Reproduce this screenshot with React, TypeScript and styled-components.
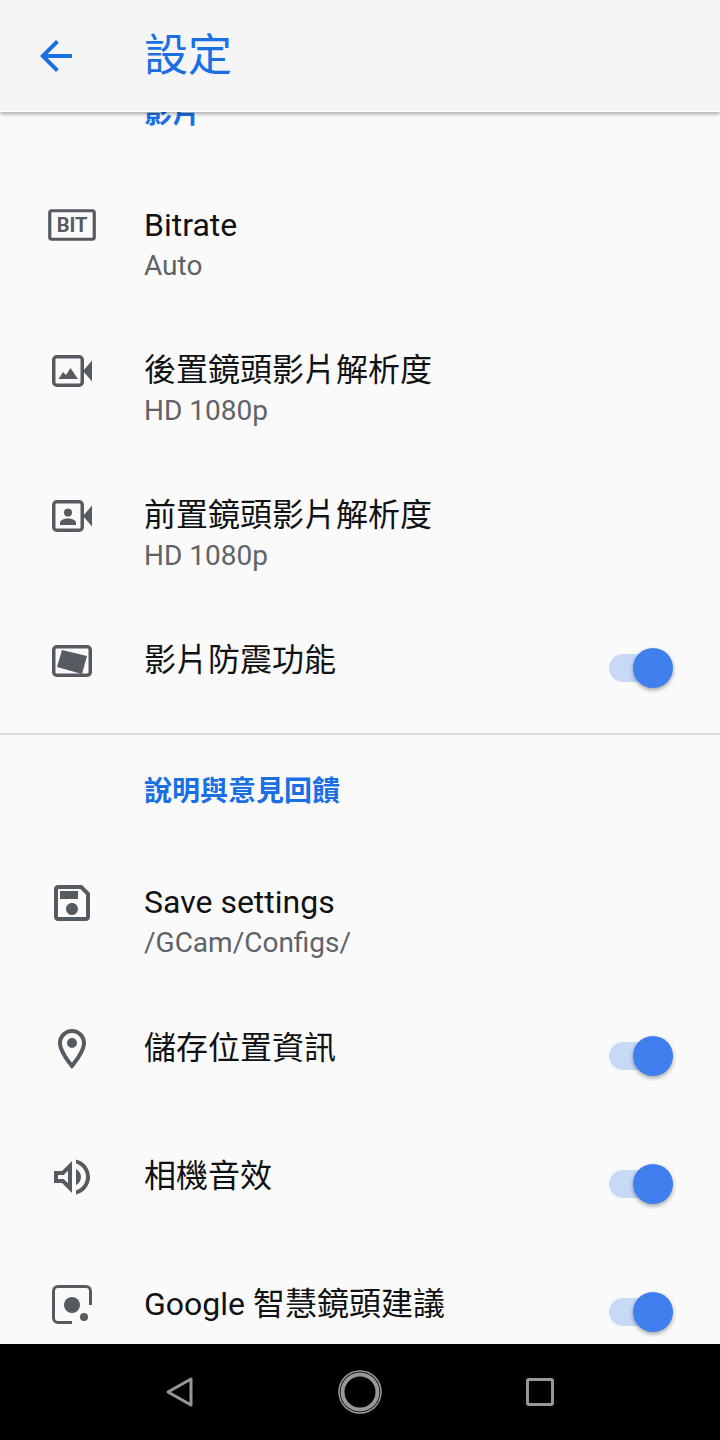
import React from "react";
import styled, { createGlobalStyle } from "styled-components";

const GlobalStyle = createGlobalStyle`
  html, body {
    margin: 0;
    padding: 0;
    background: #000;
  }
  * {
    box-sizing: border-box;
  }
`;

const FONT = `Roboto, "Noto Sans CJK TC", sans-serif`;
const BLUE = "#1a6fe3";
const ICON = "#565b61";

const Screen = styled.div`
  width: 720px;
  height: 1440px;
  display: flex;
  flex-direction: column;
  overflow: hidden;
  background: #fafafa;
  font-family: ${FONT};
`;

const Toolbar = styled.header`
  flex: 0 0 112px;
  display: flex;
  align-items: center;
  background: #f5f5f5;
  border-bottom: 1px solid #fff;
  box-shadow: 0 2px 4px rgba(0, 0, 0, 0.32);
  position: relative;
  z-index: 2;
  padding-left: 32px;
`;

const BackIcon = styled.svg`
  width: 48px;
  height: 48px;
  fill: ${BLUE};
  margin-right: 64px;
`;

const ToolbarTitle = styled.h1`
  margin: 0;
  font-size: 44px;
  line-height: 48px;
  font-weight: 400;
  color: ${BLUE};
`;

const Scroller = styled.main`
  flex: 1;
  min-height: 0;
  overflow: hidden;
`;

const ScrollContent = styled.div`
  margin-top: -18px;
`;

const SectionTitle = styled.h2<{ $top?: number; $bottom: number }>`
  margin: 0;
  padding: ${(p) => p.$top ?? 0}px 0 ${(p) => p.$bottom}px 144px;
  font-size: 28px;
  line-height: 40px;
  font-weight: 700;
  color: ${BLUE};
`;

const Divider = styled.hr`
  margin: 0;
  border: 0;
  height: 2px;
  background: #dcdcdc;
`;

const Row = styled.div<{ $height: number }>`
  height: ${(p) => p.$height}px;
  flex-shrink: 0;
  display: flex;
  align-items: flex-start;
  padding: 22px 47px 0 48px;
`;

const RowIcon = styled.svg`
  flex: 0 0 48px;
  width: 48px;
  height: 48px;
  margin: -1px 48px 0 0;
  fill: ${ICON};
`;

const RowText = styled.div`
  flex: 1;
  min-width: 0;
`;

const RowTitle = styled.div`
  font-size: 32px;
  line-height: 44px;
  color: #111214;
`;

const RowSub = styled.div`
  font-size: 28px;
  line-height: 38px;
  color: #5f6368;
`;

const SwitchBox = styled.div`
  position: relative;
  width: 64px;
  height: 40px;
  margin-top: 10px;
  flex: 0 0 64px;
`;

const SwitchTrack = styled.div`
  position: absolute;
  left: 0;
  top: 6px;
  width: 60px;
  height: 28px;
  border-radius: 14px;
  background: #c8d9f8;
`;

const SwitchThumb = styled.div`
  position: absolute;
  right: 0;
  top: 0;
  width: 40px;
  height: 40px;
  border-radius: 50%;
  background: #3f80ee;
  box-shadow: 0 2px 4px rgba(0, 0, 0, 0.35);
`;

const NavBar = styled.nav`
  flex: 0 0 96px;
  background: #000;
  display: flex;
  justify-content: center;
  align-items: center;
  gap: 120px;
`;

const NavIcon = styled.svg`
  width: 60px;
  height: 60px;
  fill: none;
  stroke: #989898;
`;

function BitIcon() {
  return (
    <RowIcon viewBox="0 0 48 48">
      <rect x="1.750" y="8.750" width="44.500" height="28.500" rx="2" fill="none" stroke={ICON} strokeWidth="3.200" />
      <text x="24" y="30" textAnchor="middle" fontFamily="Roboto, sans-serif" fontWeight="700" fontSize="20">
        BIT
      </text>
    </RowIcon>
  );
}

function CameraFrame() {
  return (
    <>
      <rect x="5.750" y="9.750" width="28.500" height="28.500" rx="3" fill="none" stroke={ICON} strokeWidth="3.500" />
      <path d="M35 24L44 13.500V34.500Z" />
    </>
  );
}

function RearVideoIcon() {
  return (
    <RowIcon viewBox="0 0 48 48">
      <CameraFrame />
      <path d="M10.500 32L15 25l3 3 4.500-7L30 32Z" />
    </RowIcon>
  );
}

function FrontVideoIcon() {
  return (
    <RowIcon viewBox="0 0 48 48">
      <CameraFrame />
      <circle cx="20" cy="20.500" r="4" />
      <path d="M12 33v-2.500c0-2.500 5-4 8-4s8 1.500 8 4V33Z" />
    </RowIcon>
  );
}

function StabilizeIcon() {
  return (
    <RowIcon viewBox="0 0 48 48">
      <rect x="5.750" y="9.750" width="36.500" height="28.500" rx="3" fill="none" stroke={ICON} strokeWidth="3.500" />
      <path d="M14 13L39 19L34 37L9 30Z" />
    </RowIcon>
  );
}

function SaveIcon() {
  return (
    <RowIcon viewBox="0 0 24 24">
      <path d="M17 3H5c-1.110 0-2 .9-2 2v14c0 1.100.89 2 2 2h14c1.100 0 2-.9 2-2V7l-4-4zm2 16H5V5h11.170L19 7.830V19zm-7-7c-1.660 0-3 1.340-3 3s1.340 3 3 3 3-1.340 3-3-1.340-3-3-3zM6 6h9v4H6z" />
    </RowIcon>
  );
}

function PlaceIcon() {
  return (
    <RowIcon viewBox="0 0 24 24">
      <path d="M12 2C8.130 2 5 5.130 5 9c0 5.250 7 13 7 13s7-7.750 7-13c0-3.870-3.130-7-7-7zM7 9c0-2.760 2.240-5 5-5s5 2.240 5 5c0 2.880-2.880 7.190-5 9.880C9.920 16.210 7 11.850 7 9z" />
      <circle cx="12" cy="9" r="2.500" />
    </RowIcon>
  );
}

function VolumeIcon() {
  return (
    <RowIcon viewBox="0 0 24 24">
      <path d="M3 9v6h4l5 5V4L7 9H3zm7-.17v6.340L7.830 13H5v-2h2.830L10 8.830zM16.500 12c0-1.770-1.020-3.290-2.500-4.030v8.050c1.480-.73 2.500-2.250 2.500-4.020zM14 3.230v2.060c2.890.86 5 3.540 5 6.710s-2.110 5.850-5 6.710v2.060c4.010-.91 7-4.490 7-8.770 0-4.280-2.990-7.860-7-8.770z" />
    </RowIcon>
  );
}

function LensIcon() {
  return (
    <RowIcon viewBox="0 0 48 48">
      <path
        d="M42.500 24V10a4.500 4.500 0 0 0-4.500-4.500H10A4.500 4.500 0 0 0 5.500 10v27a4.500 4.500 0 0 0 4.500 4.500h14"
        fill="none"
        stroke={ICON}
        strokeWidth="3"
      />
      <circle cx="24" cy="24" r="8" />
      <circle cx="36" cy="36" r="4" />
    </RowIcon>
  );
}

function Switch() {
  return (
    <SwitchBox>
      <SwitchTrack />
      <SwitchThumb />
    </SwitchBox>
  );
}

interface SettingProps {
  icon: React.ReactNode;
  title: string;
  sub?: string;
  toggle?: boolean;
  height: number;
}

function Setting({ icon, title, sub, toggle, height }: SettingProps) {
  return (
    <Row $height={height}>
      {icon}
      <RowText>
        <RowTitle>{title}</RowTitle>
        {sub && <RowSub>{sub}</RowSub>}
      </RowText>
      {toggle && <Switch />}
    </Row>
  );
}

export default function App() {
  return (
    <Screen>
      <GlobalStyle />
      <Toolbar>
        <BackIcon viewBox="0 0 24 24">
          <path d="M20 11H7.830l5.590-5.590L12 4l-8 8 8 8 1.410-1.410L7.830 13H20v-2z" />
        </BackIcon>
        <ToolbarTitle>設定</ToolbarTitle>
      </Toolbar>
      <Scroller>
        <ScrollContent>
          <SectionTitle $bottom={47}>影片</SectionTitle>
          <Setting icon={<BitIcon />} title="Bitrate" sub="Auto" height={145} />
          <Setting icon={<RearVideoIcon />} title="後置鏡頭影片解析度" sub="HD 1080p" height={145} />
          <Setting icon={<FrontVideoIcon />} title="前置鏡頭影片解析度" sub="HD 1080p" height={145} />
          <Setting icon={<StabilizeIcon />} title="影片防震功能" toggle height={117} />
          <Divider />
          <SectionTitle $top={37} $bottom={46}>說明與意見回饋</SectionTitle>
          <Setting icon={<SaveIcon />} title="Save settings" sub="/GCam/Configs/" height={146} />
          <Setting icon={<PlaceIcon />} title="儲存位置資訊" toggle height={128} />
          <Setting icon={<VolumeIcon />} title="相機音效" toggle height={128} />
          <Setting icon={<LensIcon />} title="Google 智慧鏡頭建議" toggle height={128} />
        </ScrollContent>
      </Scroller>
      <NavBar>
        <NavIcon viewBox="0 0 60 60" strokeWidth="3" strokeLinejoin="round">
          <path d="M18 30L41 17V43Z" />
        </NavIcon>
        <NavIcon viewBox="0 0 60 60">
          <circle cx="30" cy="30" r="21" strokeWidth="1.500" />
          <circle cx="30" cy="30" r="17.500" strokeWidth="4" />
        </NavIcon>
        <NavIcon viewBox="0 0 60 60" strokeWidth="3">
          <rect x="17.500" y="17.500" width="25" height="25" rx="1.500" />
        </NavIcon>
      </NavBar>
    </Screen>
  );
}
